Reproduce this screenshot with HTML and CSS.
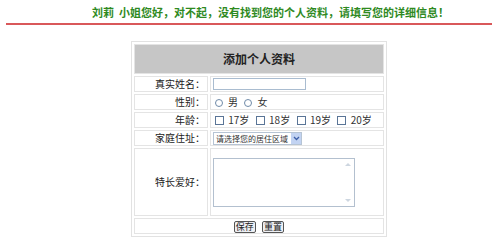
FILE: index.html
```html
<!DOCTYPE html>
<html lang="zh-CN">
<head>
    <meta charset="UTF-8">
    <title>添加个人资料</title>
    <link rel="stylesheet" href="styles.css">
</head>
<body>
    <div class="notice">刘莉&nbsp;&nbsp;小姐您好，对不起，没有找到您的个人资料，请填写您的详细信息！</div>

    <form class="profile-form">
        <table class="form-table">
            <tr>
                <th colspan="2" class="title">添加个人资料</th>
            </tr>
            <tr>
                <td class="label">真实姓名：</td>
                <td class="field"><input type="text" class="text-input"></td>
            </tr>
            <tr>
                <td class="label">性别：</td>
                <td class="field">
                    <span class="radio"></span>男&nbsp;
                    <span class="radio"></span>女
                </td>
            </tr>
            <tr>
                <td class="label">年龄：</td>
                <td class="field">
                    <span class="check"></span> 17岁&nbsp;
                    <span class="check"></span> 18岁&nbsp;
                    <span class="check"></span> 19岁&nbsp;
                    <span class="check"></span> 20岁
                </td>
            </tr>
            <tr>
                <td class="label">家庭住址：</td>
                <td class="field">
                    <div class="select">
                        <span class="select-text">请选择您的居住区域</span>
                        <span class="select-arrow">
                            <svg width="7" height="5" viewBox="0 0 7 5"><path d="M1 1 L3.5 3.5 L6 1" fill="none" stroke="#3d5fa8" stroke-width="1.3"/></svg>
                        </span>
                    </div>
                </td>
            </tr>
            <tr>
                <td class="label tall">特长爱好：</td>
                <td class="field">
                    <div class="textarea">
                        <span class="scroll-up"></span>
                        <span class="scroll-down"></span>
                    </div>
                </td>
            </tr>
            <tr>
                <td colspan="2" class="actions">
                    <span class="btn">保存</span>
                    <span class="btn">重置</span>
                </td>
            </tr>
        </table>
    </form>
</body>
</html>
```

FILE: styles.css
```css
body {
    margin: 0;
    background: #fff;
    font-family: "Noto Sans CJK SC", sans-serif;
    font-size: 10px;
    color: #222;
}
.notice {
    margin-left: 6px;
    padding-left: 86px;
    height: 23px;
    line-height: 25px;
    border-bottom: 2px solid #d9585a;
    color: #2f8a1f;
    font-weight: bold;
    font-size: 11px;
    white-space: nowrap;
}
.profile-form {
    margin: 16px 0 0 131px;
}
.form-table {
    width: 256px;
    border: 1px solid #e2e2e2;
    border-spacing: 2px;
}
.form-table td, .form-table th {
    border: 1px solid #e4e4e4;
    padding: 0;
    height: 14px;
    line-height: 14px;
    white-space: nowrap;
}
.title {
    background: #c6c6c6;
    height: 28px !important;
    font-size: 12px;
    font-weight: bold;
    color: #222;
}
.label {
    width: 70px;
    text-align: right;
    padding-right: 2px !important;
}
.tall {
    height: 66px !important;
}
.field {
    padding-left: 2px !important;
    color: #333;
}
.text-input {
    display: block;
    width: 93px;
    height: 12px;
    box-sizing: border-box;
    border: 1px solid #a9bcd0;
    padding: 0;
    margin: 0;
}
.radio {
    display: inline-block;
    width: 6px;
    height: 6px;
    border: 1px solid #6f8aa8;
    border-radius: 50%;
    margin: 0 5px 0 2px;
    vertical-align: -1px;
}
.check {
    display: inline-block;
    width: 7px;
    height: 7px;
    border: 1px solid #5a7597;
    margin: 0 2px 0 2px;
    vertical-align: -1px;
}
.select {
    display: flex;
    align-items: center;
    width: 89px;
    height: 13px;
    box-sizing: border-box;
    border: 1px solid #b6c4d4;
    font-size: 8px;
    line-height: 11px;
}
.select-text {
    flex: 1;
    padding-left: 2px;
    white-space: nowrap;
    overflow: hidden;
}
.select-arrow {
    width: 10px;
    height: 11px;
    background: #c2d3f2;
    display: flex;
    align-items: center;
    justify-content: center;
}
.textarea {
    position: relative;
    width: 142px;
    height: 49px;
    box-sizing: border-box;
    border: 1px solid #b3c0cf;
    margin-top: 1px;
}
.scroll-up, .scroll-down {
    position: absolute;
    right: 3px;
    width: 0;
    height: 0;
    border-left: 3px solid transparent;
    border-right: 3px solid transparent;
}
.scroll-up {
    top: 4px;
    border-bottom: 3px solid #cdd6e0;
}
.scroll-down {
    bottom: 4px;
    border-top: 3px solid #cdd6e0;
}
.actions {
    text-align: center;
}
.btn {
    display: inline-block;
    width: 22px;
    height: 12px;
    line-height: 10px;
    box-sizing: border-box;
    border: 1px solid #555;
    border-radius: 2px;
    background: #eef0f4;
    font-size: 9px;
    text-align: center;
    margin: 0 2px;
    vertical-align: middle;
}
```
